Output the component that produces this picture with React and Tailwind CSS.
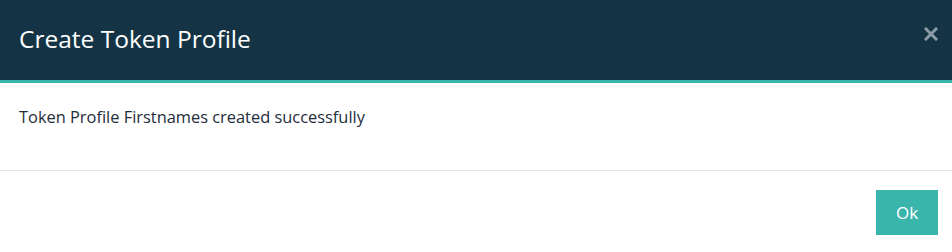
export default function App() {
  return (
    <div className="w-[952px] h-[252px] bg-white font-['Open_Sans',sans-serif]">
      <div className="h-[83px] bg-[#143445] border-b-[3px] border-[#3ab5ac] flex items-center justify-between pl-[19px] pr-[14px]">
        <h4 className="text-white text-[24.5px] leading-none pb-[2px]">Create Token Profile</h4>
        <button className="text-[#8b9ba7] self-start mt-[27px]">
          <svg width="14" height="14" viewBox="0 0 14 14">
            <path d="M2 2L12 12M12 2L2 12" stroke="currentColor" strokeWidth="3" strokeLinecap="square" />
          </svg>
        </button>
      </div>
      <div className="h-[88px] border-b border-[#e3e5ea] px-[19px] pt-[22px]">
        <p className="text-[#1f2d3a] text-[16.4px]">Token Profile Firstnames created successfully</p>
      </div>
      <div className="flex justify-end pt-[19px] pr-[14px]">
        <button className="w-[62px] h-[45px] bg-[#3ab5ac] text-white text-[17px]">Ok</button>
      </div>
    </div>
  );
}
